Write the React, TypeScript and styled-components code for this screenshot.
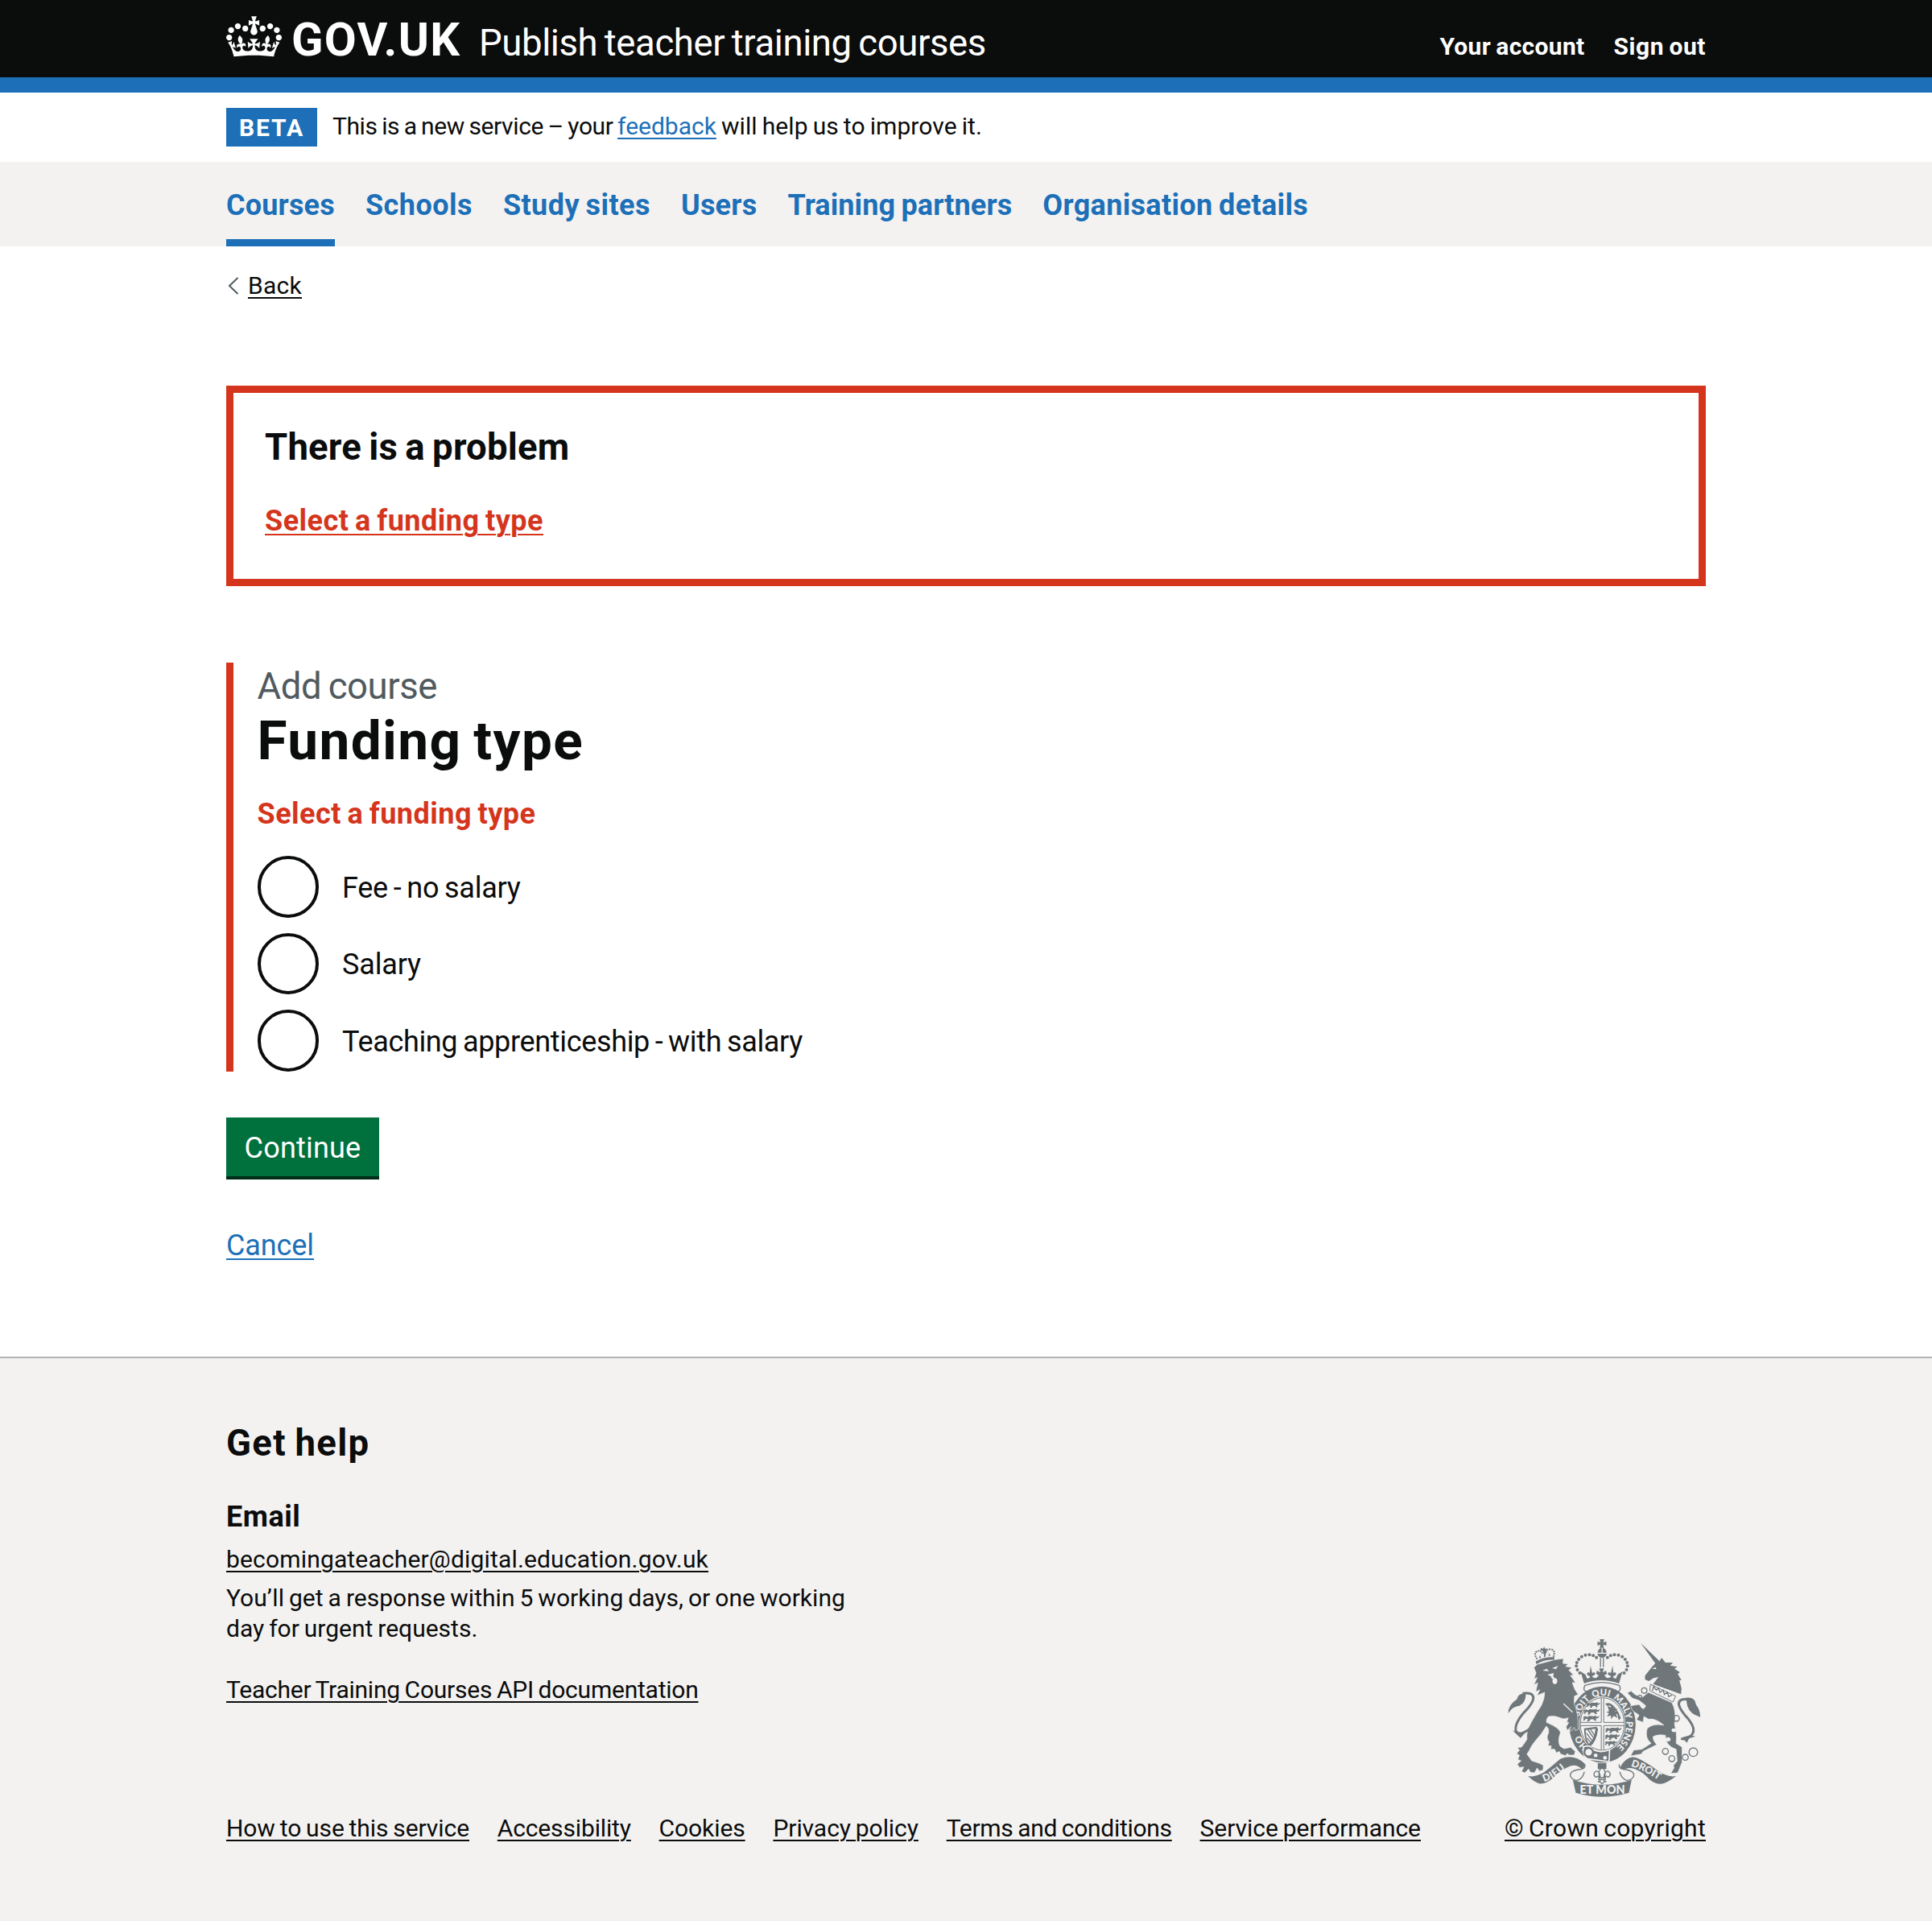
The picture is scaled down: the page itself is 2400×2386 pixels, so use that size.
import React from "react";
import styled, { createGlobalStyle, css } from "styled-components";

const ink = "#0b0c0c";
const blue = "#1d70b8";
const red = "#d4351c";
const grey = "#f3f2f1";
const arms = "#6f777b";

const GlobalStyle = createGlobalStyle`
  *, *::before, *::after { box-sizing: border-box; }
  body { margin: 0; background: ${grey}; color: ${ink}; font-family: Roboto, "Liberation Sans", sans-serif; }
  h1, h2, h3, p, ul, fieldset { margin: 0; padding: 0; border: 0; font-weight: 400; list-style: none; }
`;

type Size = "s" | "m" | "l" | "xl";
const sizes: Record<Size, string> = { s: "30px", m: "36px", l: "45.5px", xl: "67.5px" };

interface TextProps { $size?: Size; $bold?: boolean; $track?: number; }
const text = css<TextProps>`
  font-size: ${(p) => sizes[p.$size ?? "s"]};
  font-weight: ${(p) => (p.$bold ? 700 : 400)};
  letter-spacing: ${(p) => p.$track ?? 0}px;
  word-spacing: -0.05em;
  white-space: nowrap;
`;
const Text = styled.span<TextProps>`${text}`;
const Link = styled.a<TextProps & { $color?: string }>`
  ${text}
  color: ${(p) => p.$color ?? ink};
  text-decoration: underline;
  text-decoration-thickness: 2px;
  text-underline-offset: 4px;
`;

const Container = styled.div`width: 1838px; margin: 0 auto;`;

const Header = styled.header`background: ${ink}; border-bottom: 19px solid ${blue}; height: 115px; color: #fff;`;
const HeaderRow = styled(Container)`display: flex; align-items: flex-start;`;
const Crown = styled.svg`width: 69px; height: 51px; margin: 20px 12px 0 0; fill: #fff;`;
const Logotype = styled.span`font-size: 58px; line-height: 60px; font-weight: 700; padding-top: 19px; width: 233px; letter-spacing: 1.3px;`;
const Product = styled(Text)`line-height: 48px; padding-top: 30px;`;
const Account = styled.nav`display: flex; gap: 36px; margin-left: auto; padding-top: 38px; line-height: 40px;`;

const Phase = styled.div`background: #fff; height: 86px; padding-top: 19px;`;
const PhaseRow = styled(Container)`display: flex; align-items: center; height: 48px; line-height: 48px;`;
const PhaseText = styled.p`padding-top: 2px;`;
const Tag = styled.strong`background: ${blue}; color: #fff; width: 113px; height: 48px; line-height: 50px; margin-right: 19px; text-align: center; font-size: 30px; letter-spacing: 1.9px;`;

const Nav = styled.nav`background: ${grey}; height: 105px;`;
const NavRow = styled(Container)`display: flex; gap: 38px;`;
const NavItem = styled.a<{ $active?: boolean }>`
  color: ${blue}; height: 105px; line-height: 108px; flex: none;
  border-bottom: ${(p) => (p.$active ? `9px solid ${blue}` : "0")};
`;

const Main = styled.main`background: #fff; height: 1379px;`;
const Back = styled.div`display: flex; align-items: center; padding-top: 29px; line-height: 40px;`;
const Chevron = styled.svg`width: 14px; height: 22px; margin: 0 11px 0 2px; fill: none; stroke: #505a5f; stroke-width: 2;`;

const ErrorSummary = styled.section`
  margin-top: 104px; height: 249px; border: 9px solid ${red}; padding: 40px 39px; display: flex; flex-direction: column; line-height: 56px;
`;
const SummaryLine = styled.div`height: 56px; margin-bottom: 35px;`;

const FormGroup = styled.fieldset`
  margin-top: 95px; height: 508px; border-left: 9px solid ${red}; padding: 2px 0 0 29.5px;
`;
const Caption = styled.div`color: #505a5f; line-height: 56px; height: 56px;`;
const Title = styled.h1`line-height: 78px; height: 78px;`;
const FieldError = styled.p`color: ${red}; line-height: 48px; height: 48px; margin-top: 28px;`;
const Radios = styled.div`display: flex; flex-direction: column; gap: 19.2px; margin-top: 28px;`;
const Radio = styled.label`display: flex; align-items: center; height: 76.5px; gap: 29px; line-height: 76px;`;
const RadioLabel = styled(Text)`padding-top: 3px;`;
const Circle = styled.span`width: 76.5px; height: 76.5px; border: 4px solid ${ink}; border-radius: 50%; flex: none;`;

const Button = styled.button`
  display: block; margin: 57px 0 0; padding: 4px 0 0; border: 0; width: 190px; height: 73px; background: #00703c; color: #fff;
  box-shadow: 0 4px 0 #002d18; font-family: inherit; line-height: 69px;
`;
const Cancel = styled.div`margin-top: 62px; line-height: 48px;`;

const Footer = styled.footer`background: ${grey}; border-top: 2px solid #b1b4b6; height: 701px;`;
const FooterTitle = styled.h2`padding-top: 78px; line-height: 56px;`;
const FooterSub = styled.h3`padding-top: 32px; line-height: 48px;`;
const FooterLine = styled.p<{ $gap?: number }>`line-height: 38px; height: 38px; margin-top: ${(p) => p.$gap ?? 0}px;`;
const FooterBottom = styled.div`display: flex; justify-content: space-between; align-items: flex-end; height: 172px; line-height: 38px;`;
const FooterLinks = styled.ul`display: flex; gap: 34.8px;`;
const FooterItem = styled.li`display: flex;`;
const Copyright = styled.div`display: flex; flex-direction: column; align-items: flex-end;`;
const Arms = styled.svg`width: 241px; height: 198px; margin: 0 5px 19px 0; overflow: visible;`;

function CrownIcon() {
  return (
    <Crown viewBox="0 0 132 97">
      <path d="M25 30.2c3.5 1.5 7.7-.2 9.1-3.7 1.5-3.6-.2-7.8-3.9-9.2-3.6-1.4-7.6.3-9.1 3.9-1.4 3.5.3 7.5 3.9 9zM9 39.5c3.6 1.5 7.8-.2 9.2-3.7 1.5-3.6-.2-7.8-3.9-9.1-3.6-1.5-7.6.2-9.1 3.8-1.4 3.5.3 7.5 3.8 9zM4.4 57.2c3.5 1.5 7.7-.2 9.1-3.8 1.5-3.6-.2-7.7-3.9-9.1-3.5-1.5-7.6.3-9.1 3.8-1.4 3.5.3 7.6 3.9 9.1zm38.3-21.4c3.5 1.5 7.7-.2 9.1-3.8 1.5-3.6-.2-7.7-3.9-9.1-3.6-1.5-7.6.3-9.1 3.8-1.3 3.6.4 7.7 3.9 9.1zm64.4-5.6c-3.6 1.5-7.8-.2-9.1-3.7-1.5-3.6.2-7.8 3.8-9.2 3.6-1.4 7.7.3 9.2 3.9 1.3 3.5-.4 7.5-3.9 9zm15.9 9.3c-3.6 1.5-7.7-.2-9.1-3.7-1.5-3.6.2-7.8 3.7-9.1 3.6-1.5 7.7.2 9.2 3.8 1.5 3.5-.3 7.5-3.8 9zm4.7 17.7c-3.6 1.5-7.8-.2-9.2-3.8-1.5-3.6.2-7.7 3.9-9.1 3.6-1.5 7.7.3 9.2 3.8 1.3 3.5-.4 7.6-3.9 9.1zM89.3 35.8c-3.6 1.5-7.8-.2-9.2-3.8-1.4-3.6.2-7.7 3.9-9.1 3.6-1.5 7.7.3 9.2 3.8 1.4 3.6-.3 7.7-3.9 9.1zM69.7 17.7l8.9 4.7V9.3l-8.9 2.8c-.2-.3-.5-.6-.9-.9L72.4 0H59.6l3.5 11.2c-.3.3-.6.5-.9.9l-8.8-2.8v13.1l8.8-4.7c.3.3.6.7.9.9l-5 15.4v.1c-.2.8-.4 1.6-.4 2.4 0 4.1 3.1 7.5 7 8.1h.2c.3 0 .7.1 1 .1.4 0 .7 0 1-.1h.2c4-.6 7.1-4.1 7.1-8.1 0-.8-.1-1.7-.4-2.4V34l-5.1-15.4c.4-.2.7-.6 1-.9zM66 92.8c16.9 0 32.8 1.1 47.1 3.2 4-16.9 8.9-26.7 14-33.5l-9.6-3.4c1 4.9 1.1 7.2 0 10.2-1.5-1.4-3-4.3-4.2-8.7L108.6 76c2.8-2 5-3.2 7.5-3.3-4.4 9.4-10 11.9-13.6 11.2-4.3-.8-6.3-4.6-5.6-7.9 1-4.7 5.7-5.9 8-.5 4.3-8.7-3-11.4-7.6-8.8 7.1-7.2 7.9-13.5 2.1-21.1-8 6.1-8.1 12.3-4.5 20.8-4.7-5.4-12.1-2.5-9.5 6.2 3.4-5.2 7.9-2 7.2 3.1-.6 4.3-6.4 7.8-13.5 7.2-10.3-.9-10.9-8-11.2-13.8 2.5-.5 7.1 1.8 11 7.3L80.2 60c-4.1 4.4-8 5.3-12.3 5.4 1.4-4.4 8-11.6 8-11.6H55.5s6.4 7.2 7.9 11.6c-4.2-.1-8-1-12.3-5.4l1.4 16.4c3.9-5.5 8.5-7.7 10.9-7.3-.3 5.8-.9 12.8-11.1 13.8-7.2.6-12.9-2.9-13.5-7.2-.7-5 3.8-8.3 7.1-3.1 2.7-8.7-4.6-11.6-9.4-6.2 3.7-8.5 3.6-14.7-4.6-20.8-5.8 7.6-5 13.9 2.2 21.1-4.7-2.6-11.9.1-7.7 8.8 2.3-5.5 7.1-4.2 8.1.5.7 3.3-1.3 7.1-5.7 7.9-3.5.7-9-1.8-13.5-11.2 2.5.1 4.7 1.3 7.5 3.3l-4.7-15.4c-1.2 4.4-2.7 7.2-4.3 8.7-1.1-3-.9-5.3 0-10.2l-9.5 3.4c5 6.9 9.9 16.7 14 33.5 14.8-2.1 30.8-3.2 47.7-3.2z" />
    </Crown>
  );
}

const archDots = [[309, 178], [300, 166], [296, 152], [298, 139], [305, 127], [316, 117], [330, 111], [345, 110], [359, 113], [371, 120]];
const chain = [[549, 243, 10], [533, 268, 7], [541, 323, 11], [669, 347, 11], [628, 470, 11], [652, 497, 11], [702, 492, 11], [732, 473, 16]];
const smallLion = "M0 8l8-6 6 4 5-4 16 1 6-3 2 6 9-4-4 8-8 2 3 8-7-1-3-5-10 1-2 6-8 1 3-8-6-2-5 7-5-1 4-6z";

function RoyalArms() {
  return (
    <Arms viewBox="41 49 722 594" fill={arms} fontFamily="Lato, sans-serif" fontWeight="900">
      {/* crown */}
      <path d="M383 52h17l-4 12 12-4v16l-12-4 3 12h-16l3-12-11 4v-16l11 4z" />
      <path d="M375 102q2-15 15-18v18zM394 84q13 3 15 18h-15zM374 106h36q-4 13-18 16-14-3-18-16z" />
      <path d="M384 122h4v34h-4zM395 122h4v34h-4z" />
      {archDots.map(([x, y]) => (
        <g key={x}><circle cx={x} cy={y} r="6" /><circle cx={783 - x} cy={y} r="6" /></g>
      ))}
      <path d="M312 172l18 12 6 14q10 2 11-8l-8-3q-8-8 2-12l5 3 3-28 6 28 8-3q8 6-2 12l-7 3q4 8 17 6l9-10-10-4 3-13 13 7-5-15h18l-5 15 13-7 3 13-10 4 9 10q13 2 17-6l-7-3q-10-6-2-12l8 3 6-28 3 28 5-3q10 4 2 12l-8 3q1 10 11 8l6-14 18-12-13 45q-67-24-130 0z" />
      <path d="M328 224q64-22 128 0 8 16-2 22h-124q-10-6-2-22z" fill={grey} stroke={arms} strokeWidth="4" />
      {/* garter */}
      <ellipse cx="393" cy="370" rx="124" ry="142" />
      <ellipse cx="393" cy="368" rx="86" ry="103" fill={grey} />
      <ellipse cx="393" cy="368" rx="82" ry="98" fill="none" stroke={arms} strokeWidth="3" />
      <path d="M389 272v90h-79M398 272v90h78M389 464v-90h-79M398 464v-90h78" fill="none" stroke={arms} strokeWidth="3" />
      <path d={smallLion} transform="translate(333 286) scale(1 1)" />
      <path d={smallLion} transform="translate(322 311) scale(1.2 1)" />
      <path d={smallLion} transform="translate(320 336) scale(1.2 1)" />
      <path d={smallLion} transform="translate(403 380) scale(1.2 1)" />
      <path d={smallLion} transform="translate(402 405) scale(1.1 1)" />
      <path d={smallLion} transform="translate(402 430) scale(.9)" />
      <path d="M404 292q30-14 58 54l-8 8q-10-60-44-54zM412 300l12 6 3-12 9 16 14 2-10 8 16 6-12 6 6 14-14-8-12 12 2-14-16 4 8-12-10-4 10-4z" />
      <path d="M325 384l46-6 6 8q-6 50-30 66l-8-4q-14-26-14-64zm6 6q0 34 12 52 22-18 24-56z" fillRule="evenodd" />
      <path d="M338 388l24 34M348 387l18 26M334 402l22 30M336 420l14 18" stroke={arms} strokeWidth="4" />
      <path id="garter" d="M393 474A89 106 0 0 1 393 262 89 106 0 0 1 393 474" fill="none" />
      <g fill={grey} fontSize="34">
        <text><textPath href="#garter" startOffset="58">HO</textPath></text>
        <text><textPath href="#garter" startOffset="181">SOIT</textPath></text>
        <text><textPath href="#garter" startOffset="270">QUI</textPath></text>
        <text><textPath href="#garter" startOffset="348">MAL</textPath></text>
        <text><textPath href="#garter" startOffset="420">Y</textPath></text>
        <text><textPath href="#garter" startOffset="450">PENSE</textPath></text>
      </g>
      <path d="M322 454q26-12 36 10 30 14 62 0l-2 44-80-10q-18-8-16-44z" stroke={grey} strokeWidth="5" />
      <circle cx="342" cy="473" r="16" fill={grey} stroke={arms} strokeWidth="7" />
      <circle cx="368" cy="485" r="7" fill={grey} /><circle cx="403" cy="494" r="7" fill={grey} />
      {/* lion */}
      <path d="M138 158l12-12 68-18 30-4-2 18 20 2-10 9 25 5-13 9 18 19-12 1 19 27-12 0 10 26 12 18-14 6-1 26q17 45 14 85l2 13-12 4-4-12-8 12-9 4 5-18-14 14-4-14 10-16-8 0 6-17q-18 7-30 0-21-10-44-5-10 12-7 22 48 20 52 38-12 30-2 50l15 10 25-5 17 15-4 14-18 0-8-6-6 8-18-6-6-10-10 6-7-14-15 0 3-12-13-2 5-13q-10-10-7-23 12-22-4-36l-19 29q-40 45-43 60l-10 15 18 25 30 10 13 7-1 18-14 3-8-11-10 18-15-2-7-12-14 14-12-5 8-17-16 2-8-12 14-13-12-5 6-15-10-7 10-13-8-9 16-2q18-24 20-29-4-30 16-63 20-37 37-62 13-25 13-50l-28 12 10-22-15 8 7-33-14 7 12-27-12 5 8-22z" stroke={grey} strokeWidth="2" />
      <path d="M170 169l16-7 8 9zM206 160l22-9-8 13zM188 184l24-6-2 12 5 8-10 2-4-10z" fill={grey} />
      <ellipse cx="216" cy="208" rx="9" ry="11" fill={grey} />
      <path d="M248 292l34 32" stroke={grey} strokeWidth="4" />
      <path d="M148 145q30-18 66-16l0-10q-40-2-70 16zM164 84l8 4 4-8 4 8 8-2-4 10-2 16-6 0-4-16-10-4z" />
      <path d="M150 126q-14-20-2-28 14-8 24 8M182 102q6-16 22-12 16 6 6 28M160 122l2-10M196 114l-2-10M178 118v-8" fill="none" stroke={arms} strokeWidth="6" strokeDasharray="6 3" />
      <path d="M96 254q38-6 40 16 0 20-36 56-34 40-30 66 12 30 70-20" fill="none" stroke={arms} strokeWidth="9" />
      <path d="M42 328q0-32 32-52 6-24 34-22 0 36-24 46-24 4-32 16zM58 392l18 8 30 0-18 20z" />
      {/* unicorn */}
      <path d="M536 66l70 68-14 10z" />
      <path d="M590 142l16-8 8-13 14 18 28 0-10 11 26 5-10 7 20 13-8 7 14 23-8 0 8 30-2 22-104-38 20-26-18 4-18 11-14-6 0-14 24-30z" />
      <path d="M578 162l14-6 2 8z" fill={grey} />
      <path d="M572 220l94 44-10 22-86-42z" fill={grey} stroke={arms} strokeWidth="3" />
      <path d="M580 244l4-16 10 14 8-8 6 16 12-8 4 16 12-8 4 16 12-6" fill="none" stroke={arms} strokeWidth="4" />
      <path d="M564 250l88 38q18 32 10 82 10 30 6 70l22 14v56l-16 40-26 2 12-20-2-10 14-16-4-44q-40-12-40-52-28-5-46 5-2 15 14 30l-51 25-7 10-40 7 12-22 30-3 35-22q-25-20-15-55 20-20 62-13-32-27-57-22l-17-10-3 22-25-10 10-17-25-17-7-18 32-5 15 20 10-15-25-20-25-8-19-20 14-7 15 13 25 12z" stroke={grey} strokeWidth="2" />
      <path d="M712 276q-36-4-34 20 6 22 36 54 34 44 6 64-16 14-34 8" fill="none" stroke={arms} strokeWidth="9" />
      <path d="M704 270q36-4 38 26 16 20 16 46-38-10-48-40zM690 418l30-8 20 4-24 8-8 16z" />
      <g fill="none" stroke={arms} strokeWidth="4">
        {chain.map(([x, y, r]) => <circle key={x} cx={x} cy={y} r={r} />)}
      </g>
      <g fill={grey}><ellipse cx="660" cy="391" rx="9" ry="7" /><ellipse cx="638" cy="425" rx="9" ry="8" /></g>
      {/* motto ribbon */}
      <path d="M116 562q26 6 60-14 30-24 60-50 50-20 92 18l-8 24q-22-26-50-14-30 12-60 42-26 24-52 22-22-8-42-28z" />
      <path d="M668 562q-26 6-60-14-36-28-70-46-34-20-54-2-18 12-26 34l6 12q22-22 50-10 30 10 54 38 26 22 52 16 22-8 48-28z" />
      <path d="M328 518q4 20-26 20-32 6-28 24 6 14 24 16 22-4 28-32M456 518q-4 20 26 20 32 6 28 24-6 14-24 16-22-4-28-32" fill={grey} stroke={arms} strokeWidth="4" />
      <path d="M283 576q109 36 219 0l-10 48q-100 30-198 0z" />
      <path id="dieu" d="M176 583q40-10 100-68" fill="none" /><path id="droit" d="M499 525q50 14 120 64" fill="none" />
      <g fill={grey} fontSize="37">
        <text letterSpacing="2"><textPath href="#dieu">DIEU</textPath></text>
        <text><textPath href="#droit">DROIT</textPath></text>
        <text x="393" y="629" textAnchor="middle" fontSize="43">ET MON</text>
      </g>
      <path d="M376 514h32v22h-32z" />
      <path d="M392 530q-20 18-7 36-2-24-16-22-12 8-4 20 6 4 12-2l8 6h14l8-6q6 6 12 2 8-12-4-20-14-2-16 22 13-18-7-36zM380 568h24v7h-24zM386 575q-2 8-10 8l8 0 8 8 8-8 8 0q-8 0-10-8" fill={grey} stroke={arms} strokeWidth="4" />
    </Arms>
  );
}

const navItems: [string, number][] = [
  ["Courses", 0.18], ["Schools", 0.46], ["Study sites", 0.44], ["Users", 0.23], ["Training partners", 0.1], ["Organisation details", 0.34],
];
const radios: [string, number][] = [
  ["Fee - no salary", -0.27], ["Salary", -0.14], ["Teaching apprenticeship - with salary", -0.34],
];
const footerLinks: [string, number][] = [
  ["How to use this service", -0.077], ["Accessibility", -0.145], ["Cookies", -0.092],
  ["Privacy policy", -0.058], ["Terms and conditions", -0.294], ["Service performance", -0.036],
];

export default function App() {
  return (
    <>
      <GlobalStyle />
      <Header>
        <HeaderRow>
          <CrownIcon />
          <Logotype>GOV.UK</Logotype>
          <Product $size="l" $track={-0.4}>Publish teacher training courses</Product>
          <Account>
            <Text $bold $track={0.32}>Your account</Text>
            <Text $bold $track={0.53}>Sign out</Text>
          </Account>
        </HeaderRow>
      </Header>
      <Phase>
        <PhaseRow>
          <Tag>BETA</Tag>
          <PhaseText>
            <Text $track={-0.4}>This is a new service – your </Text>
            <Link $color={blue}>feedback</Link>
            <Text $track={0.08}> will help us to improve it.</Text>
          </PhaseText>
        </PhaseRow>
      </Phase>
      <Nav>
        <NavRow>
          {navItems.map(([label, track], i) => (
            <NavItem key={label} $active={i === 0}><Text $size="m" $bold $track={track}>{label}</Text></NavItem>
          ))}
        </NavRow>
      </Nav>
      <Main>
        <Container>
          <Back>
            <Chevron viewBox="0 0 14 22"><path d="M12.5 1L2 11l10.5 10" /></Chevron>
            <Link $track={0.27}>Back</Link>
          </Back>
          <ErrorSummary>
            <SummaryLine><Text as="h2" $size="l" $bold $track={0.2}>There is a problem</Text></SummaryLine>
            <SummaryLine><Link $size="m" $bold $color={red} $track={0.476}>Select a funding type</Link></SummaryLine>
          </ErrorSummary>
          <FormGroup>
            <Caption><Text $size="l" $track={-0.45}>Add course</Text></Caption>
            <Title><Text $size="xl" $bold $track={1.4}>Funding type</Text></Title>
            <FieldError><Text $size="m" $bold $track={0.476}>Select a funding type</Text></FieldError>
            <Radios>
              {radios.map(([label, track]) => (
                <Radio key={label}><Circle /><RadioLabel $size="m" $track={track}>{label}</RadioLabel></Radio>
              ))}
            </Radios>
          </FormGroup>
          <Button><Text $size="m" $track={0.2}>Continue</Text></Button>
          <Cancel><Link $size="m" $color={blue} $track={-0.1}>Cancel</Link></Cancel>
        </Container>
      </Main>
      <Footer>
        <Container>
          <FooterTitle><Text $size="l" $bold $track={1.35}>Get help</Text></FooterTitle>
          <FooterSub><Text $size="m" $bold $track={0.5}>Email</Text></FooterSub>
          <FooterLine $gap={4}><Link $track={0.163}>becomingateacher@digital.education.gov.uk</Link></FooterLine>
          <FooterLine $gap={10}><Text $track={0.03}>You’ll get a response within 5 working days, or one working</Text></FooterLine>
          <FooterLine><Text>day for urgent requests.</Text></FooterLine>
          <FooterLine $gap={38}><Link $track={-0.233}>Teacher Training Courses API documentation</Link></FooterLine>
          <FooterBottom>
            <FooterLinks>
              {footerLinks.map(([label, track]) => (
                <FooterItem key={label}><Link $track={track}>{label}</Link></FooterItem>
              ))}
            </FooterLinks>
            <Copyright>
              <RoyalArms />
              <Link $track={0.269}>© Crown copyright</Link>
            </Copyright>
          </FooterBottom>
        </Container>
      </Footer>
    </>
  );
}
